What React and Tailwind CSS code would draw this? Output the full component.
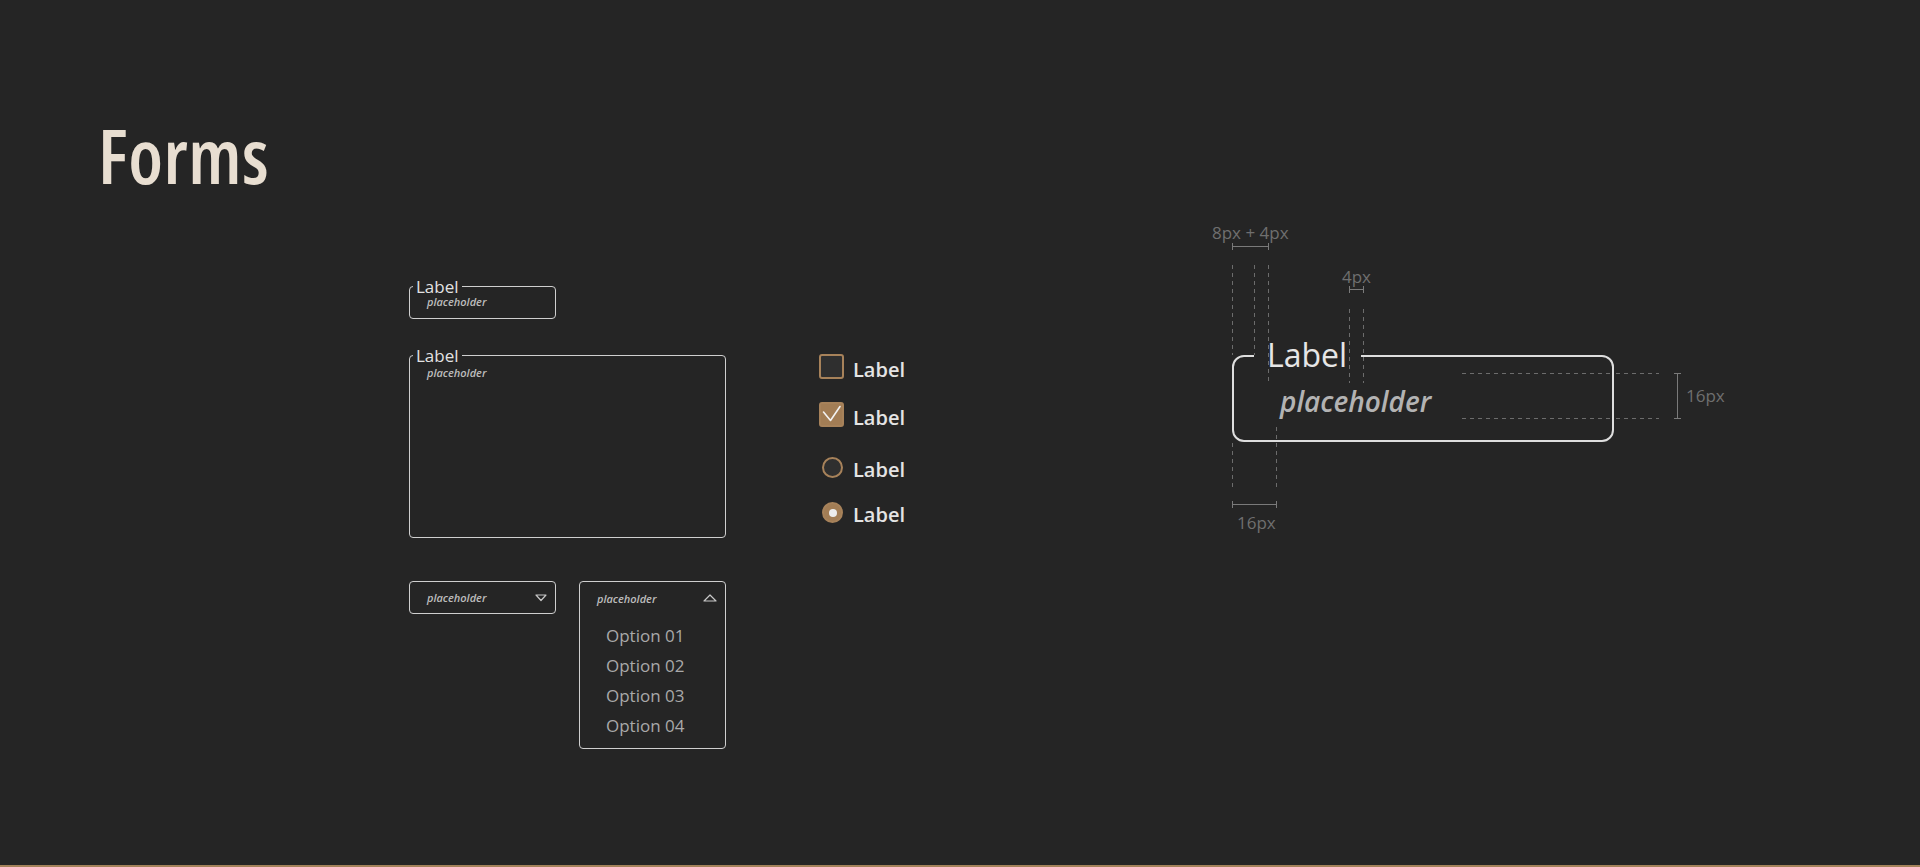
import React from "react";

function SmallInput() {
  return (
    <div className="relative w-[147px] h-[33px] border border-[#cfcfcf] rounded-[4px] pl-[17px] pt-[9px]">
      <span className="absolute left-[3px] top-[-9px] px-[3px] bg-[#252525] text-[17px] leading-none text-[#e2e2e2]">Label</span>
      <div className="text-[11px] leading-none italic font-semibold text-[#bdbdbd]">placeholder</div>
    </div>
  );
}

function TextArea() {
  return (
    <div className="relative w-[317px] h-[183px] border border-[#cfcfcf] rounded-[4px] pl-[17px] pt-[11px]">
      <span className="absolute left-[3px] top-[-9px] px-[3px] bg-[#252525] text-[17px] leading-none text-[#e2e2e2]">Label</span>
      <div className="text-[11px] leading-none italic font-semibold text-[#bdbdbd]">placeholder</div>
    </div>
  );
}

function TriDown() {
  return (
    <svg width="12" height="8" viewBox="0 0 12 8" className="block">
      <path d="M1 1 L11 1 L6 6.5 Z" fill="none" stroke="#c8c8c8" strokeWidth="1.2" strokeLinejoin="round" />
    </svg>
  );
}

function TriUp() {
  return (
    <svg width="14" height="8" viewBox="0 0 14 8" className="block">
      <path d="M1 7 L13 7 L7 1 Z" fill="none" stroke="#c8c8c8" strokeWidth="1.2" strokeLinejoin="round" />
    </svg>
  );
}

function CheckRow({ checked }) {
  return (
    <div className="h-[25px] flex items-start">
      <div
        className={
          checked
            ? "shrink-0 w-[25px] h-[25px] rounded-[3px] border-2 border-[#a7825a] bg-[#a27d55] flex items-center justify-center"
            : "shrink-0 w-[25px] h-[25px] rounded-[3px] border-2 border-[#a7825a] bg-[#2f2f2f]"
        }
      >
        {checked && (
          <svg width="21" height="21" viewBox="0 0 21 21" className="block">
            <path d="M2.5 8 L9.5 16.5 L19 2.5" fill="none" stroke="#f2f2f2" strokeWidth="1.6" strokeLinecap="round" strokeLinejoin="round" />
          </svg>
        )}
      </div>
      <span className="ml-[9px] mt-[6px] text-[20px] leading-none font-semibold text-[#e4e4e4]">Label</span>
    </div>
  );
}

function RadioRow({ checked }) {
  return (
    <div className="h-[21px] flex items-start">
      <div
        className={
          checked
            ? "shrink-0 ml-[3px] w-[21px] h-[21px] rounded-full border-2 border-[#a7825a] bg-[#a27d55] flex items-center justify-center"
            : "shrink-0 ml-[3px] w-[21px] h-[21px] rounded-full border-2 border-[#a7825a] bg-[#2f2f2f]"
        }
      >
        {checked && <div className="w-[8px] h-[8px] rounded-full bg-[#ececec]" />}
      </div>
      <span className="ml-[10px] mt-[3px] text-[20px] leading-none font-semibold text-[#e4e4e4]">Label</span>
    </div>
  );
}

function Diagram() {
  const dash = { stroke: "#6c6c6c", strokeWidth: 1, strokeDasharray: "4 4" };
  const solid = { stroke: "#7a7a7a", strokeWidth: 1 };
  return (
    <div className="relative w-[560px] h-[330px] pt-[135px] pl-[42px]">
      <div className="relative w-[382px] h-[87px] border-2 border-[#dedede] rounded-[12px] pl-[46px] pt-[30px]">
        <span className="absolute left-[20px] top-[-18px] pl-[13px] pr-[14px] bg-[#252525] text-[32px] leading-none text-[#e6e6e6]">Label</span>
        <div className="text-[28px] leading-none italic font-semibold text-[#b3b3b3]">placeholder</div>
      </div>
      <svg width="560" height="330" viewBox="0 0 560 330" className="absolute left-0 top-0 pointer-events-none">
        <line x1="42.5" y1="45" x2="42.5" y2="135" style={dash} />
        <line x1="42.5" y1="223" x2="42.5" y2="267" style={dash} />
        <line x1="64.5" y1="45" x2="64.5" y2="135" style={dash} />
        <line x1="78.5" y1="45" x2="78.5" y2="161" style={dash} />
        <line x1="159.5" y1="89" x2="159.5" y2="163" style={dash} />
        <line x1="173.5" y1="89" x2="173.5" y2="163" style={dash} />
        <line x1="86.5" y1="207" x2="86.5" y2="267" style={dash} />
        <line x1="272" y1="153.5" x2="421" y2="153.5" style={dash} />
        <line x1="426" y1="153.5" x2="469" y2="153.5" style={dash} />
        <line x1="272" y1="198.5" x2="421" y2="198.5" style={dash} />
        <line x1="426" y1="198.5" x2="469" y2="198.5" style={dash} />
        <line x1="42" y1="26.5" x2="79" y2="26.5" style={solid} />
        <line x1="42.5" y1="23" x2="42.5" y2="30" style={solid} />
        <line x1="78.5" y1="23" x2="78.5" y2="30" style={solid} />
        <line x1="159" y1="69.5" x2="174" y2="69.5" style={solid} />
        <line x1="159.5" y1="66" x2="159.5" y2="73" style={solid} />
        <line x1="173.5" y1="66" x2="173.5" y2="73" style={solid} />
        <line x1="487.5" y1="153" x2="487.5" y2="199" style={solid} />
        <line x1="484" y1="153.5" x2="491" y2="153.5" style={solid} />
        <line x1="484" y1="198.5" x2="491" y2="198.5" style={solid} />
        <line x1="42" y1="284.5" x2="87" y2="284.5" style={solid} />
        <line x1="42.5" y1="281" x2="42.5" y2="288" style={solid} />
        <line x1="86.5" y1="281" x2="86.5" y2="288" style={solid} />
      </svg>
      <span className="absolute left-[22px] top-[3px] text-[17px] leading-[20px] text-[#6f6f6f] whitespace-nowrap">8px + 4px</span>
      <span className="absolute left-[152px] top-[47px] text-[17px] leading-[20px] text-[#6f6f6f]">4px</span>
      <span className="absolute left-[496px] top-[166px] text-[17px] leading-[20px] text-[#6f6f6f]">16px</span>
      <span className="absolute left-[47px] top-[293px] text-[17px] leading-[20px] text-[#6f6f6f]">16px</span>
    </div>
  );
}

export default function App() {
  return (
    <div className="w-[1920px] h-[867px] bg-[#252525] border-b-2 border-[#a4825a] flex flex-col font-['Open_Sans',sans-serif] overflow-hidden">
      <div className="pl-[98px] pt-[118px]">
        <h1 className="h-[75px] text-[75px] leading-none font-semibold text-[#e8ded1] font-stretch-75% tracking-[0.5px]">Forms</h1>
      </div>
      <div className="mt-[27px] flex items-start">
        <div className="ml-[409px] w-[317px] pt-[66px] flex flex-col">
          <SmallInput />
          <div className="mt-[36px]">
            <TextArea />
          </div>
          <div className="mt-[43px] flex items-start gap-[23px]">
            <div className="w-[147px] h-[33px] border border-[#cfcfcf] rounded-[4px] pl-[17px] pr-[8px] flex items-center justify-between">
              <span className="text-[11px] leading-none italic font-semibold text-[#bdbdbd]">placeholder</span>
              <TriDown />
            </div>
            <div className="w-[147px] h-[168px] border border-[#cfcfcf] rounded-[4px] flex flex-col">
              <div className="h-[32px] pl-[17px] pr-[8px] flex items-center justify-between">
                <span className="text-[11px] leading-none italic font-semibold text-[#bdbdbd]">placeholder</span>
                <TriUp />
              </div>
              <div className="pt-[7px] pl-[26px] flex flex-col">
                <span className="text-[17px] leading-[30px] text-[#a9a9a9]">Option 01</span>
                <span className="text-[17px] leading-[30px] text-[#a9a9a9]">Option 02</span>
                <span className="text-[17px] leading-[30px] text-[#a9a9a9]">Option 03</span>
                <span className="text-[17px] leading-[30px] text-[#a9a9a9]">Option 04</span>
              </div>
            </div>
          </div>
        </div>
        <div className="ml-[93px] w-[200px] pt-[134px] flex flex-col">
          <CheckRow checked={false} />
          <div className="mt-[23px]">
            <CheckRow checked={true} />
          </div>
          <div className="mt-[30px]">
            <RadioRow checked={false} />
          </div>
          <div className="mt-[24px]">
            <RadioRow checked={true} />
          </div>
        </div>
        <div className="ml-[171px]">
          <Diagram />
        </div>
      </div>
    </div>
  );
}
